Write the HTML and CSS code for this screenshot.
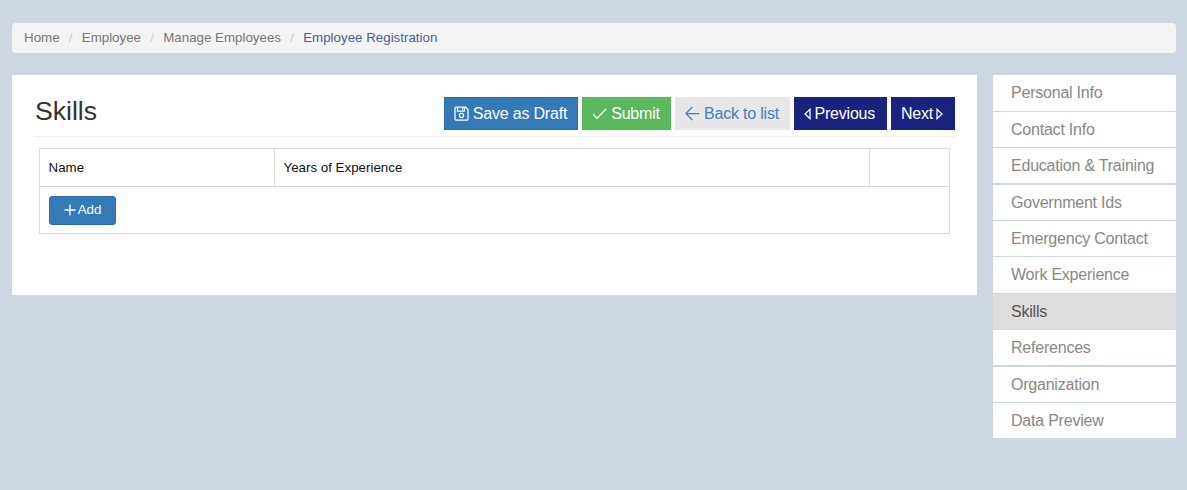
FILE: index.html
```html
<!DOCTYPE html>
<html lang="en">
<head>
<meta charset="utf-8">
<title>Employee Registration</title>
<link rel="stylesheet" href="styles.css">
</head>
<body>
<nav class="breadcrumb">
  <a>Home</a><span class="sep">/</span><a>Employee</a><span class="sep">/</span><a>Manage Employees</a><span class="sep">/</span><a class="current">Employee Registration</a>
</nav>
<div class="layout">
  <main class="panel">
    <header class="panel-head">
      <h1>Skills</h1>
      <div class="actions">
        <button class="btn save"><svg width="15" height="15" viewBox="0 0 15 15"><path d="M2 1h9.5L14 3.5V13q0 1-1 1H2q-1 0-1-1V2q0-1 1-1zM3.5 1v4h7V1M8.6 1.5v2.3"/><circle cx="7.5" cy="9.5" r="2.1"/></svg>Save as Draft</button>
        <button class="btn submit"><svg width="15" height="15" viewBox="0 0 15 15"><path d="M1 8l4 4.3L14 3"/></svg>Submit</button>
        <button class="btn back"><svg width="15" height="15" viewBox="0 0 15 15"><path d="M14.3 7.5H1M7.3 1L.9 7.5l6.4 6.5"/></svg>Back to list</button>
        <button class="btn nav prev"><svg width="7" height="12" viewBox="0 0 7 12"><path d="M6 1.3v9.4L1 6z"/></svg>Previous</button>
        <button class="btn nav next">Next<svg width="7" height="12" viewBox="0 0 7 12"><path d="M1 1.3v9.4L6 6z"/></svg></button>
      </div>
    </header>
    <div class="grid">
      <div class="grid-head"><div>Name</div><div>Years of Experience</div><div></div></div>
      <div class="grid-foot"><button class="add"><svg width="12" height="12" viewBox="0 0 12 12"><path d="M6 .5v11M.5 6h11"/></svg>Add</button></div>
    </div>
  </main>
  <aside class="steps">
    <a>Personal Info</a>
    <a>Contact Info</a>
    <a>Education &amp; Training</a>
    <a>Government Ids</a>
    <a>Emergency Contact</a>
    <a>Work Experience</a>
    <a class="active">Skills</a>
    <a>References</a>
    <a>Organization</a>
    <a>Data Preview</a>
  </aside>
</div>
</body>
</html>
```
FILE: styles.css
```css
* { box-sizing: border-box; }
body {
  margin: 0;
  padding: 23px 11px 0 12px;
  background: #cdd7e1;
  font-family: "Liberation Sans", Arial, sans-serif;
  font-size: 13.33px;
  color: #222;
}
button { font-family: inherit; white-space: nowrap; }
svg { fill: none; stroke: currentColor; flex: none; }
.breadcrumb {
  display: flex;
  align-items: center;
  height: 30px;
  padding: 0 0 2px 12px;
  border-radius: 4px;
  background: #f4f4f4;
  color: #777;
}
.breadcrumb .sep { width: 22.2px; text-align: center; color: #ccc; }
.breadcrumb .current { color: #515c95; }
.layout {
  display: flex;
  align-items: flex-start;
  justify-content: space-between;
  margin-top: 22.4px;
}
.panel {
  width: 965px;
  height: 220px;
  padding: 0 22.5px 0 23px;
  background: #fff;
}
.panel-head {
  display: flex;
  justify-content: space-between;
  height: 62px;
  border-bottom: 1px solid #f0f0f0;
}
h1 {
  margin: 20px 0 0;
  font-size: 26.6px;
  font-weight: 400;
  line-height: 32px;
  color: #333;
}
.actions { display: flex; gap: 4px; padding-top: 21.6px; }
.btn {
  display: flex;
  align-items: center;
  justify-content: center;
  gap: 4px;
  height: 33px;
  padding: 1px 1px 0 0;
  border: 1px solid transparent;
  font-size: 16px;
  letter-spacing: -0.2px;
  color: #fff;
}
.btn svg { stroke-width: 1.25; }
.save { width: 134px; background: #337ab7; border-color: #2e6da4; }
.submit { width: 89px; background: #5cb85c; border-color: #5cb85c; }
.back { width: 115px; background: #e7e7e7; color: #4a7ebb; }
.nav { gap: 3px; background: #1a237e; }
.prev { width: 92.5px; }
.next { width: 64px; }
.grid {
  width: 911px;
  height: 86px;
  margin: 11px 0 0 4px;
  border: 1px solid #ddd;
  color: #111;
}
.grid-head {
  display: grid;
  grid-template-columns: 234px 595px 1fr;
  height: 38px;
  border-bottom: 1px solid #d4d4d4;
}
.grid-head div { padding: 0 8.5px; line-height: 38px; }
.grid-head div + div { border-left: 1px solid #ddd; }
.grid-foot { padding: 9px; }
.add {
  display: flex;
  align-items: center;
  justify-content: center;
  gap: 2px;
  width: 67px;
  height: 29px;
  padding: 0 0 2px;
  border: 1px solid #2e6da4;
  border-radius: 3px;
  background: #337ab7;
  color: #fff;
  font-size: 13.33px;
}
.add svg { stroke-width: 1.3; }
.steps { display: flex; flex-direction: column; gap: 1.1px; width: 183px; }
.steps a {
  height: 35.3px;
  padding-left: 18px;
  background: #fff;
  font-size: 16px;
  letter-spacing: -0.22px;
  line-height: 35px;
  color: #888;
}
.steps .active { background: #ddd; color: #555; }
```
